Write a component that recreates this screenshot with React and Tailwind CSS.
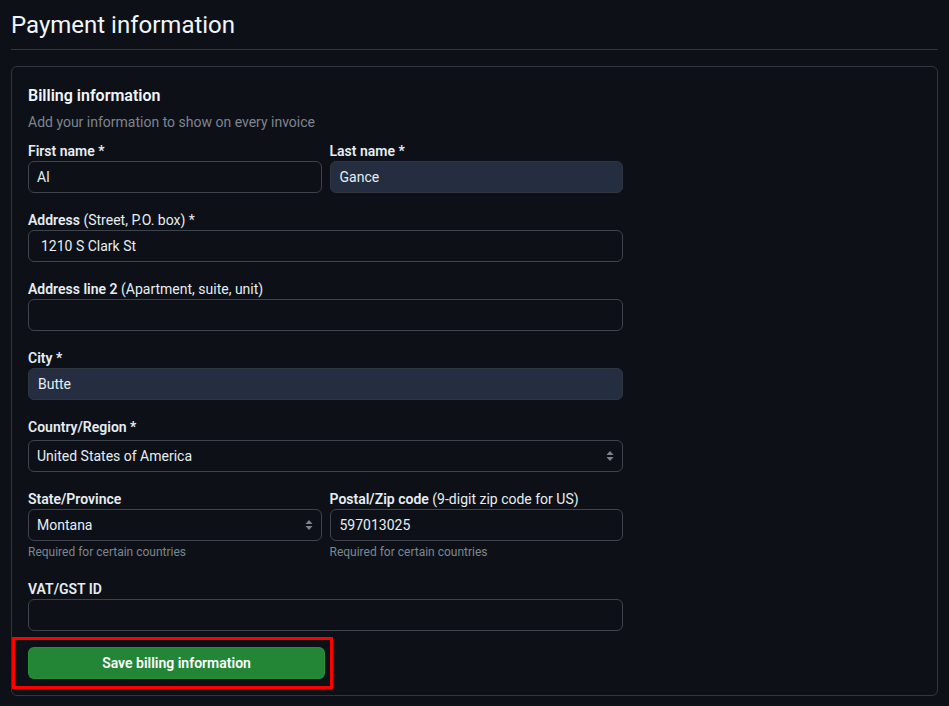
import React from 'react';

const font = { fontFamily: '"Segoe UI", Roboto, "Noto Sans", sans-serif' };

const Label = ({ children, hint }) => (
   <label className="block pt-[1px] text-sm font-semibold leading-5 text-[#e6edf3]">
      {children}
      {hint && <span className="font-normal"> {hint}</span>}
   </label>
);

const Input = ({ value = '', auto = false, className = '' }) => (
   <div
      className={`h-8 flex items-center border border-[#3d444d] rounded-md text-sm text-[#e6edf3] ${
         auto ? 'bg-[#242e40] border-[#30363d]' : 'bg-[#0d1117]'
      } ${className}`}>
      {value}
   </div>
);

const Select = ({ value }) => (
   <div className="h-8 flex items-center justify-between border border-[#3d444d] rounded-md bg-[#0d1117] text-sm text-[#e6edf3] pl-2 pr-2">
      <span>{value}</span>
      <svg width="8" height="12" viewBox="0 0 8 12" className="fill-[#7d8590]">
         <path d="M4 1 L7.5 5 H0.5 Z" />
         <path d="M4 11 L7.5 7 H0.5 Z" />
      </svg>
   </div>
);

const Hint = ({ children }) => <p className="text-xs leading-[18px] text-[#7d8590] mt-[2px]">{children}</p>;

export default function App() {
   return (
      <div className="min-h-screen bg-[#0d1117] px-[11px]" style={font}>
         <div className="pb-[7px] pt-[8px] border-b border-[#30363d]">
            <h1 className="text-2xl leading-[34px] font-normal text-[#f0f6fc]">Payment information</h1>
         </div>
         <div className="mt-4 border border-[#30363d] rounded-md p-4">
            <div className="w-[595px]">
               <h2 className="pt-[1px] text-base font-semibold leading-6 text-[#f0f6fc]">Billing information</h2>
               <p className="mt-[4px] text-sm leading-5 text-[#7d8590]">Add your information to show on every invoice</p>

               <div className="mt-[8px] grid grid-cols-2 gap-2">
                  <div>
                     <Label>First name *</Label>
                     <Input value="Al" className="pl-[8px]" />
                  </div>
                  <div>
                     <Label>Last name *</Label>
                     <Input value="Gance" auto className="pl-[9px]" />
                  </div>
               </div>

               <div className="mt-4">
                  <Label hint="(Street, P.O. box) *">Address</Label>
                  <Input value="1210 S Clark St" className="pl-3" />
               </div>

               <div className="mt-4">
                  <Label hint="(Apartment, suite, unit)">Address line 2</Label>
                  <Input />
               </div>

               <div className="mt-4">
                  <Label>City *</Label>
                  <Input value="Butte" auto className="pl-[9px]" />
               </div>

               <div className="mt-4">
                  <Label>Country/Region *</Label>
                  <div className="mt-[3px]">
                     <Select value="United States of America" />
                  </div>
               </div>

               <div className="mt-4 grid grid-cols-2 gap-2">
                  <div>
                     <Label>State/Province</Label>
                     <Select value="Montana" />
                     <Hint>Required for certain countries</Hint>
                  </div>
                  <div>
                     <Label hint="(9-digit zip code for US)">Postal/Zip code</Label>
                     <Input value="597013025" className="pl-[9px]" />
                     <Hint>Required for certain countries</Hint>
                  </div>
               </div>

               <div className="mt-[17px]">
                  <Label>VAT/GST ID</Label>
                  <Input />
               </div>

               <div className="relative mt-4 w-[297px]">
                  <button className="w-full h-8 rounded-md bg-[#238636] border border-[#2ea043]/40 text-sm font-semibold text-white">
                     Save billing information
                  </button>
                  <div className="absolute -left-4 -right-2 -top-[10px] -bottom-[10px] border-[3px] border-[#ff0000] pointer-events-none" />
               </div>
            </div>
         </div>
      </div>
   );
}
